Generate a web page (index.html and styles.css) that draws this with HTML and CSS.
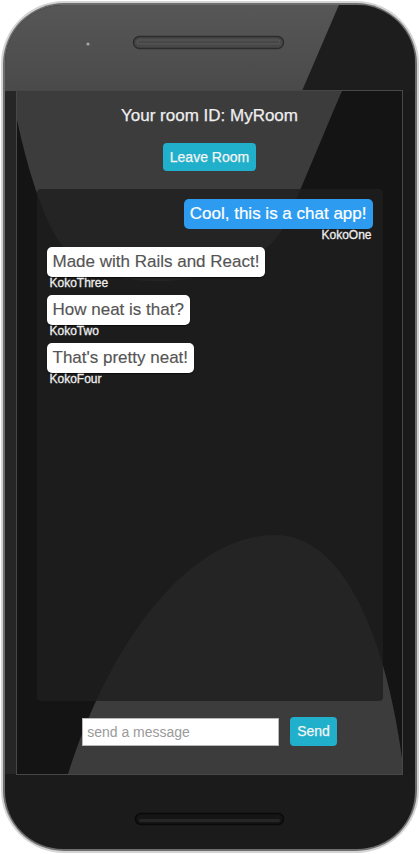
FILE: index.html
```html
<!DOCTYPE html>
<html lang="en">
<head>
<meta charset="utf-8">
<title>Chat Room</title>
<link rel="stylesheet" href="styles.css">
</head>
<body>
<div class="phone">
  <svg class="phone-art" width="420" height="854" viewBox="0 0 420 854" aria-hidden="true">
    <defs>
      <clipPath id="bodyClip"><rect x="5" y="5" width="410" height="844" rx="58"/></clipPath>
      <clipPath id="screenClip"><rect x="17" y="91" width="385" height="683"/></clipPath>
      <linearGradient id="topGrad" x1="0" y1="0" x2="0" y2="1">
        <stop offset="0" stop-color="#575757"/>
        <stop offset="1" stop-color="#4a4a4a"/>
      </linearGradient>
    </defs>
    <rect x="1" y="1" width="418" height="852" rx="63" fill="#d4d4d4"/>
    <rect x="3" y="3" width="414" height="848" rx="61" fill="#6e6e6e"/>
    <rect x="5" y="5" width="410" height="844" rx="58" fill="#1b1b1b"/>
    <g clip-path="url(#bodyClip)">
      <rect x="0" y="0" width="420" height="91" fill="url(#topGrad)"/>
      <polygon points="341,0 420,0 420,91 302,91" fill="#1d1d1d"/>
      <rect x="5" y="91" width="12" height="683" fill="#262626"/>
      <rect x="402" y="91" width="13" height="683" fill="#1a1a1a"/>
    </g>
    <rect x="17" y="91" width="385" height="683" fill="#141414"/>
    <g clip-path="url(#screenClip)">
      <path d="M17,91 L342,91 C325,130 305,180 285,225 C255,285 120,300 70,255 C45,230 28,170 17,120 Z" fill="#3c3c3c"/>
      <path d="M68,774 C110,640 190,535 275,535 C345,535 388,640 404,774 Z" fill="#3c3c3c"/>
    </g>
    <rect x="16.5" y="90.5" width="386" height="684" fill="none" stroke="#474747" stroke-width="1"/>
    <rect x="133.5" y="36.5" width="150" height="12" rx="6" fill="#474747" stroke="#2c2c2c" stroke-width="1.5"/>
    <rect x="137" y="40" width="143" height="4" rx="2" fill="none" stroke="#5a5a5a" stroke-width="1"/>
    <circle cx="88" cy="44" r="1.6" fill="#a8a8a8"/>
    <rect x="135.5" y="813.5" width="148" height="11" rx="5.5" fill="#151515" stroke="#0a0a0a" stroke-width="1.5"/>
    <rect x="139" y="819" width="141" height="3" rx="1.5" fill="#262626"/>
  </svg>

  <div class="screen">
    <h1 class="room-title">Your room ID: MyRoom</h1>
    <button class="btn leave-btn" type="button">Leave Room</button>

    <div class="chat">
      <div class="msg mine">
        <div class="bubble bubble-mine">Cool, this is a chat app!</div>
        <div class="author">KokoOne</div>
      </div>
      <div class="msg">
        <div class="bubble">Made with Rails and React!</div>
        <div class="author">KokoThree</div>
      </div>
      <div class="msg">
        <div class="bubble">How neat is that?</div>
        <div class="author">KokoTwo</div>
      </div>
      <div class="msg">
        <div class="bubble">That's pretty neat!</div>
        <div class="author">KokoFour</div>
      </div>
    </div>

    <form class="composer">
      <input class="composer-input" type="text" placeholder="send a message">
      <button class="btn send-btn" type="button">Send</button>
    </form>
  </div>
</div>
</body>
</html>
```

FILE: styles.css
```css
html, body {
  margin: 0;
  padding: 0;
  background: #ffffff;
}

body {
  font-family: "Liberation Sans", Arial, Helvetica, sans-serif;
  width: 420px;
  height: 854px;
  overflow: hidden;
}

.phone {
  display: grid;
  width: 420px;
  height: 854px;
}

.phone-art,
.screen {
  grid-area: 1 / 1;
}

.phone-art {
  display: block;
}

.screen {
  margin: 91px 18px 80px 17px;
  display: flex;
  flex-direction: column;
  align-items: center;
  min-height: 0;
}

.room-title {
  margin: 15px 0 0;
  font-size: 17px;
  line-height: 20px;
  font-weight: normal;
  color: #efefef;
  -webkit-text-stroke: 0.25px #efefef;
}

.btn {
  border: none;
  border-radius: 4px;
  background: #21b0cb;
  color: #f4f4f4;
  font-family: inherit;
  font-size: 14px;
  padding: 6px 7px;
  cursor: pointer;
  -webkit-text-stroke: 0.25px #f4f4f4;
}

.leave-btn {
  margin-top: 17px;
  line-height: 16px;
}

.chat {
  margin-top: 18px;
  width: 346px;
  height: 512px;
  box-sizing: border-box;
  padding: 10px;
  border-radius: 4px;
  background: rgba(30, 30, 30, 0.8);
  display: flex;
  flex-direction: column;
}

.msg {
  display: flex;
  flex-direction: column;
  align-items: flex-start;
  margin-bottom: 6px;
}

.msg.mine {
  align-items: flex-end;
}

.bubble {
  padding: 5px 6px;
  border-radius: 5px;
  font-size: 17px;
  line-height: 20px;
  background: #ffffff;
  color: #555555;
  -webkit-text-stroke: 0.15px #555555;
  box-shadow: 0 1px 1px rgba(0, 0, 0, 0.6);
}

.bubble-mine {
  background: #2d9cf0;
  color: #ffffff;
  -webkit-text-stroke: 0.2px #ffffff;
  box-shadow: none;
}

.author {
  font-size: 12px;
  line-height: 12px;
  color: #eeeeee;
  -webkit-text-stroke: 0.3px #eeeeee;
  margin: 0 3px;
}

.msg.mine .author {
  margin: 0 1px;
}

.composer {
  margin: 16px 0 28px;
  display: flex;
  align-items: center;
  gap: 11px;
}

.composer-input {
  width: 197px;
  height: 28px;
  box-sizing: border-box;
  border: 1px solid #b8b8b8;
  border-radius: 0;
  padding: 0 4px;
  font-family: inherit;
  font-size: 14px;
  color: #444;
  background: #ffffff;
  outline: none;
}

.composer-input::placeholder {
  color: #9a9a9a;
}

.send-btn {
  line-height: 17px;
}
```
